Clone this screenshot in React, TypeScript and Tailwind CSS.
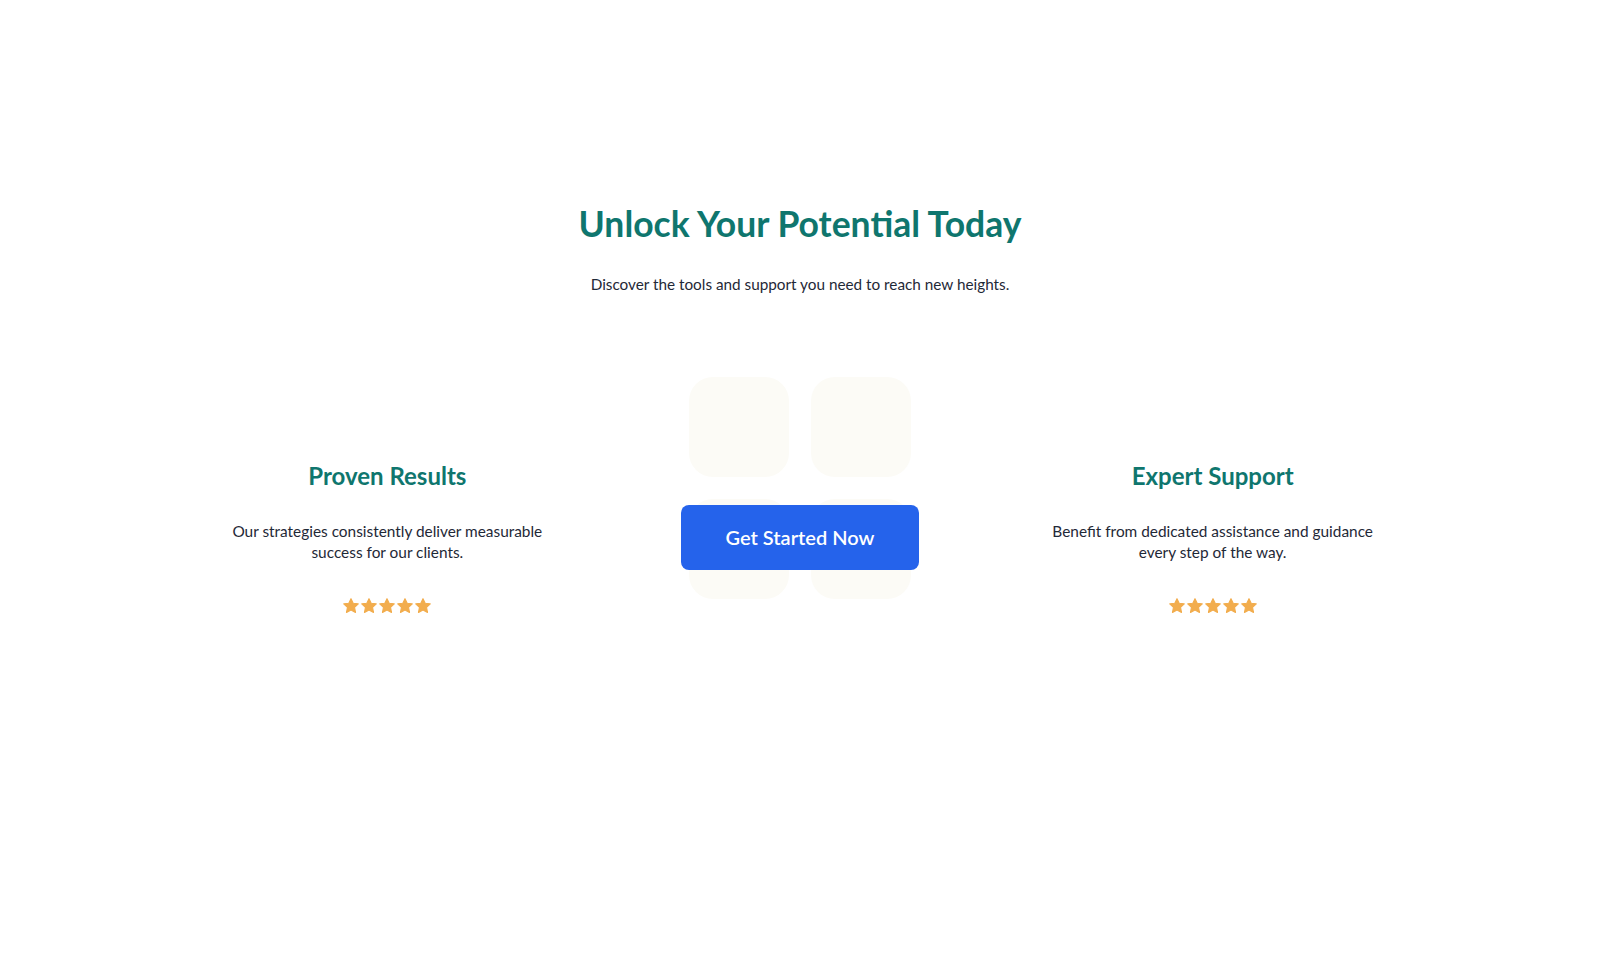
import React from "react";

function Star() {
  return (
    <svg viewBox="0 0 24 24" className="h-[18px] w-[18px]" fill="#f2ad4e">
      <path d="M12 2.2l2.9 6.2 6.8.8-5 4.7 1.3 6.7L12 17.3l-6 3.3 1.3-6.7-5-4.7 6.8-.8z" strokeLinejoin="round" stroke="#f2ad4e" strokeWidth="1.5" />
    </svg>
  );
}

function Stars() {
  return (
    <div className="mt-[34px] flex items-center justify-center">
      {[0, 1, 2, 3, 4].map((i) => (
        <Star key={i} />
      ))}
    </div>
  );
}

function Feature({ title, text }: { title: string; text: string }) {
  return (
    <div className="flex flex-col items-center text-center">
      <h3 className="text-[24px] font-bold leading-8 text-[#0f766e]">{title}</h3>
      <p className="mt-[29px] max-w-[335px] text-[15.4px] leading-[21px] text-[#1f2937]">{text}</p>
      <Stars />
    </div>
  );
}

export default function App() {
  return (
    <div className="min-h-screen bg-white font-['Lato',sans-serif]">
      <section className="pt-[202px] text-center">
        <h1 className="text-[35.5px] font-bold leading-[44px] text-[#0f766e]">Unlock Your Potential Today</h1>
        <p className="mt-[26px] text-[15.3px] leading-6 text-[#1f2937]">
          Discover the tools and support you need to reach new heights.
        </p>

        {/* Features row */}
        <div className="mx-auto mt-[163px] grid max-w-[1190px] grid-cols-3 items-center gap-12">
          <Feature title="Proven Results" text="Our strategies consistently deliver measurable success for our clients." />

          <div className="relative flex h-[156px] items-center justify-center">
            <div className="absolute left-1/2 top-[-82px] grid w-[222px] -translate-x-1/2 grid-cols-[100px_100px] gap-[22px]">
              <div className="h-[100px] w-[100px] rounded-[24px] bg-[#fcfbf6]" />
              <div className="h-[100px] w-[100px] rounded-[24px] bg-[#fcfbf6]" />
              <div className="h-[100px] w-[100px] rounded-[24px] bg-[#fcfbf6]" />
              <div className="h-[100px] w-[100px] rounded-[24px] bg-[#fcfbf6]" />
            </div>
            <button className="relative h-[65px] w-[238px] rounded-lg bg-[#2563eb] text-[20px] font-semibold text-white">
              Get Started Now
            </button>
          </div>

          <Feature title="Expert Support" text="Benefit from dedicated assistance and guidance every step of the way." />
        </div>
      </section>
    </div>
  );
}
